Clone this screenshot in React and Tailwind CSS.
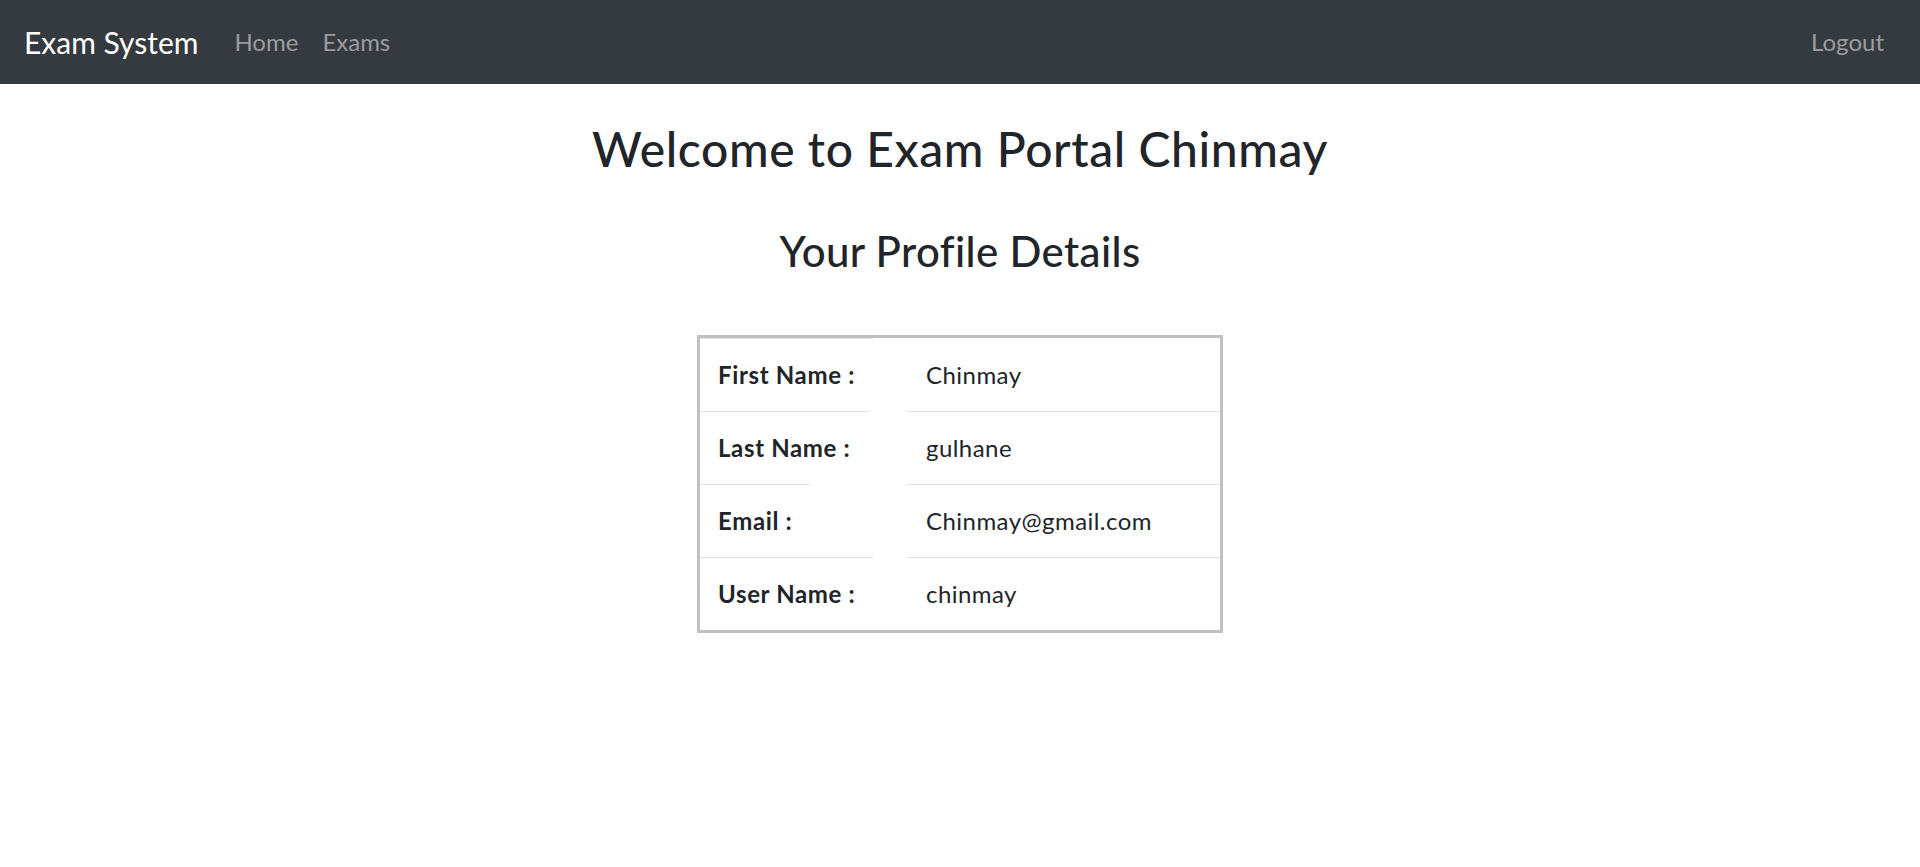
import React from 'react';

const profile = [
  { label: 'First Name :', value: 'Chinmay' },
  { label: 'Last Name :', value: 'gulhane' },
  { label: 'Email :', value: 'Chinmay@gmail.com' },
  { label: 'User Name :', value: 'chinmay' },
];

const App = () => {
  return (
    <div className="min-h-screen bg-white font-['Lato',sans-serif] text-[#212529]">
      {/* Navbar */}
      <nav className="h-[84px] bg-[#343a40] flex items-center px-[24px]">
        <span className="text-[30px] leading-[1.5] text-white mr-[24px]">Exam System</span>
        <a className="px-[12px] text-[24px] leading-[1.5] text-white/50">Home</a>
        <a className="px-[12px] text-[24px] leading-[1.5] text-white/50">Exams</a>
        <a className="ml-auto px-[12px] text-[24px] leading-[1.5] text-white/50">Logout</a>
      </nav>

      <div className="text-center">
        <h1 className="mt-[36px] text-[48px] font-medium leading-[1.2] tracking-[0.58px]">Welcome to Exam Portal Chinmay</h1>
        <h2 className="mt-[48px] text-[42px] font-medium leading-[1.2] tracking-[0.37px]">Your Profile Details</h2>
      </div>

      {/* Profile table */}
      <div className="flex justify-center mt-[59px]">
        <div className="w-[526px] border-[3px] border-[#c0c0c0] text-[24px] leading-[1.5]">
          {profile.map((row, i) => (
            <div key={row.label} className="flex">
              <div className="w-[208px] shrink-0 text-left">
                <span className="inline-block border-t border-[#dee2e6] p-[18px] font-bold tracking-[0.65px]">{row.label}</span>
              </div>
              <div className={`flex-1 p-[18px] text-left tracking-[0.45px] border-t ${i === 0 ? 'border-transparent' : 'border-[#dee2e6]'}`}>
                {row.value}
              </div>
            </div>
          ))}
        </div>
      </div>
    </div>
  );
};

export default App;
